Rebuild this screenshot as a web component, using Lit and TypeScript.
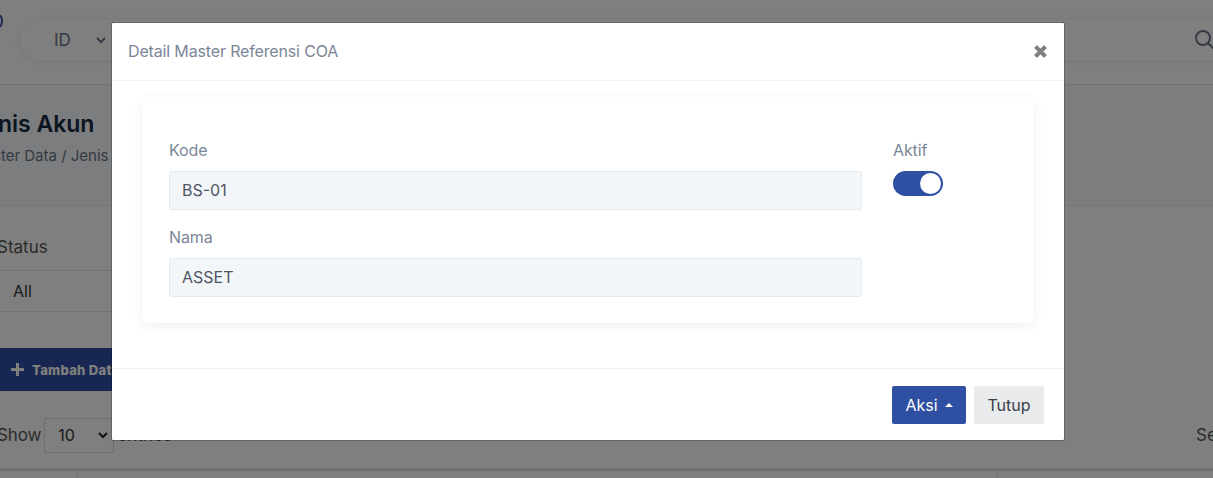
import { LitElement, html, css } from "lit";
import { customElement } from "lit/decorators.js";

@customElement("app-root")
export class AppRoot extends LitElement {
  static styles = css`
    :host { display: block; width: 1213px; height: 478px; position: relative; overflow: hidden; font-family: "Inter", "Roboto", sans-serif; background: #fbfbfd; color: #1c2b3a; }
    * { box-sizing: border-box; }
    .page { width: 1213px; height: 478px; overflow: hidden; display: flex; flex-direction: column; }
    .top { height: 85px; flex: none; background: #fff; border-bottom: 1px solid #e3e8ef; padding: 20px 0 0 20px; position: relative; }
    .logo { position: absolute; left: -6px; top: 14px; width: 9px; height: 14px; border: 2px solid #2f4fa2; border-radius: 50%; }
    .pill { height: 40px; width: 1230px; border-radius: 20px; background: #fff; box-shadow: 0 1px 8px rgba(0,0,0,.09); display: flex; align-items: center; padding-left: 34px; color: #6b7688; font-size: 17px; position: relative; }
    .pill svg.chev { margin-left: 24px; }
    .pill svg.search { position: absolute; left: 1172px; top: 7px; }
    .head { height: 121px; flex: none; background: #f9fafc; border-bottom: 1px solid #e8ecf1; padding: 25px 0 0 0; margin-left: -29px; }
    .head h1 { margin: 0; font-size: 23px; line-height: 28px; font-weight: 600; color: #142a42; }
    .crumb { font-size: 15px; line-height: 20px; margin-top: 8px; color: #6b7688; }
    .body { flex: 1; background: #fff; padding: 29px 0 0 0; margin-left: -3px; }
    .lab { font-size: 17px; line-height: 24px; color: #555; }
    .sel { height: 42px; width: 140px; border-top: 1px solid #e4e4e4; border-bottom: 1px solid #e4e4e4; margin-top: 11px; padding-left: 16px; font-size: 16px; line-height: 40px; color: #333; }
    .add { height: 43px; width: 160px; background: #2f4fa2; margin-top: 36px; margin-left: 3px; color: #fff; font-size: 13px; font-weight: 800; letter-spacing: 0.3px; display: flex; align-items: center; gap: 8px; padding-left: 11px; white-space: nowrap; }
    .show { display: flex; align-items: center; height: 34px; margin-top: 27px; font-size: 17px; color: #555; gap: 3px; letter-spacing: -0.1px; }
    .mini { width: 70px; height: 35px; border: 1px solid #ddd; padding-left: 13px; display: flex; align-items: center; justify-content: space-between; padding-right: 4px; color: #333; font-size: 16px; }
    .tline { height: 3px; background: #e0e0e0; margin-top: 16px; }
    .cells { display: flex; height: 12px; margin-left: 3px; }
    .cell { width: 78px; border-right: 1px solid #e4e4e4; flex: none; }
    .cell.w { width: 920px; }
    .se { position: absolute; left: 1196px; top: 425px; font-size: 17px; color: #555; }
    .back { position: absolute; inset: 0; background: rgba(0,0,0,.5); }
    .modal { position: absolute; left: 111px; top: 22px; width: 954px; height: 419px; background: #fff; border: 1px solid rgba(0,0,0,.2); border-radius: 2px; display: flex; flex-direction: column; background-clip: padding-box; }
    .mh { height: 58px; flex: none; border-bottom: 1px solid #edf2f9; display: flex; align-items: center; justify-content: space-between; padding: 0 16px 0 16px; }
    .mh span { font-size: 16px; color: #7b8698; letter-spacing: -0.15px; margin-bottom: 2px; }
    .mb { flex: 1; padding: 16px 31px 0 31px; }
    .card { height: 226px; box-shadow: 0 3px 12px rgba(50,60,90,.07); border-radius: 4px; padding: 41px 27px 0 26px; display: flex; gap: 31px; }
    .col { width: 693px; flex: none; }
    .f label, .ak label { display: block; font-size: 16px; line-height: 24px; color: #7b8698; height: 24px; margin-bottom: 9px; letter-spacing: -0.1px; }
    .f .inp { height: 39px; background: #f3f6f9; border: 1px solid #e6ebf0; border-radius: 2px; padding-left: 12px; font-size: 16px; line-height: 37px; color: #4e5564; margin-bottom: 15px; }
    .sw { width: 50px; height: 25px; border-radius: 13px; background: #2f4fa2; position: relative; }
    .knob { position: absolute; right: 2px; top: 2px; width: 21px; height: 21px; background: #fff; border-radius: 50%; }
    .mf { height: 72px; flex: none; border-top: 1px solid #edf0f6; display: flex; justify-content: flex-end; align-items: flex-start; gap: 8px; padding: 17px 20px 0 0; }
    .btn { height: 38px; border-radius: 2px; font-size: 16px; display: flex; align-items: center; justify-content: center; }
    .p { width: 74px; background: #2f4fa2; color: #fff; gap: 7px; }
    .caret { width: 0; height: 0; border-left: 4px solid transparent; border-right: 4px solid transparent; border-bottom: 4px solid #fff; }
    .s { width: 70px; background: #e9eaec; color: #3a3f47; }
  `;
  render() {
    const chev = html`<svg class="chev" width="12" height="12" viewBox="0 0 12 12" fill="none" stroke="#6b7688" stroke-width="2"><path d="M2 4l4 4 4-4"/></svg>`;
    return html`
      <div class="page">
        <div class="top">
          <div class="logo"></div>
          <div class="pill">ID ${chev}
            <svg class="search" width="26" height="26" viewBox="0 0 26 26" fill="none" stroke="#6b7688" stroke-width="2"><circle cx="11" cy="11" r="7"/><path d="M16 16l6 6"/></svg>
          </div>
        </div>
        <div class="head"><h1>Jenis Akun</h1><div class="crumb">Master Data / Jenis Akun</div></div>
        <div class="body">
          <div class="lab">Status</div>
          <div class="sel">All</div>
          <div class="add"><svg width="13" height="13" viewBox="0 0 13 13" fill="#fff"><path d="M5 0h3v5h5v3H8v5H5V8H0V5h5z"/></svg> Tambah Data</div>
          <div class="show">Show <div class="mini">10 <svg width="12" height="12" viewBox="0 0 12 12" fill="none" stroke="#222" stroke-width="2"><path d="M2 4l4 4 4-4"/></svg></div> entries</div>
          <div class="tline"></div>
          <div class="cells"><div class="cell"></div><div class="cell w"></div></div>
        </div>
        <div class="se">Search</div>
      </div>
      <div class="back"></div>
      <div class="modal">
        <div class="mh"><span>Detail Master Referensi COA</span>
          <svg width="15" height="15" viewBox="0 0 15 15" fill="none" stroke="#808080" stroke-width="4"><path d="M2.5 2.5l10 10M12.5 2.5l-10 10"/></svg>
        </div>
        <div class="mb">
          <div class="card">
            <div class="col">
              <div class="f"><label>Kode</label><div class="inp">BS-01</div></div>
              <div class="f"><label>Nama</label><div class="inp">ASSET</div></div>
            </div>
            <div class="ak"><label>Aktif</label><div class="sw"><div class="knob"></div></div></div>
          </div>
        </div>
        <div class="mf">
          <div class="btn p">Aksi <span class="caret"></span></div>
          <div class="btn s">Tutup</div>
        </div>
      </div>
    `;
  }
}
